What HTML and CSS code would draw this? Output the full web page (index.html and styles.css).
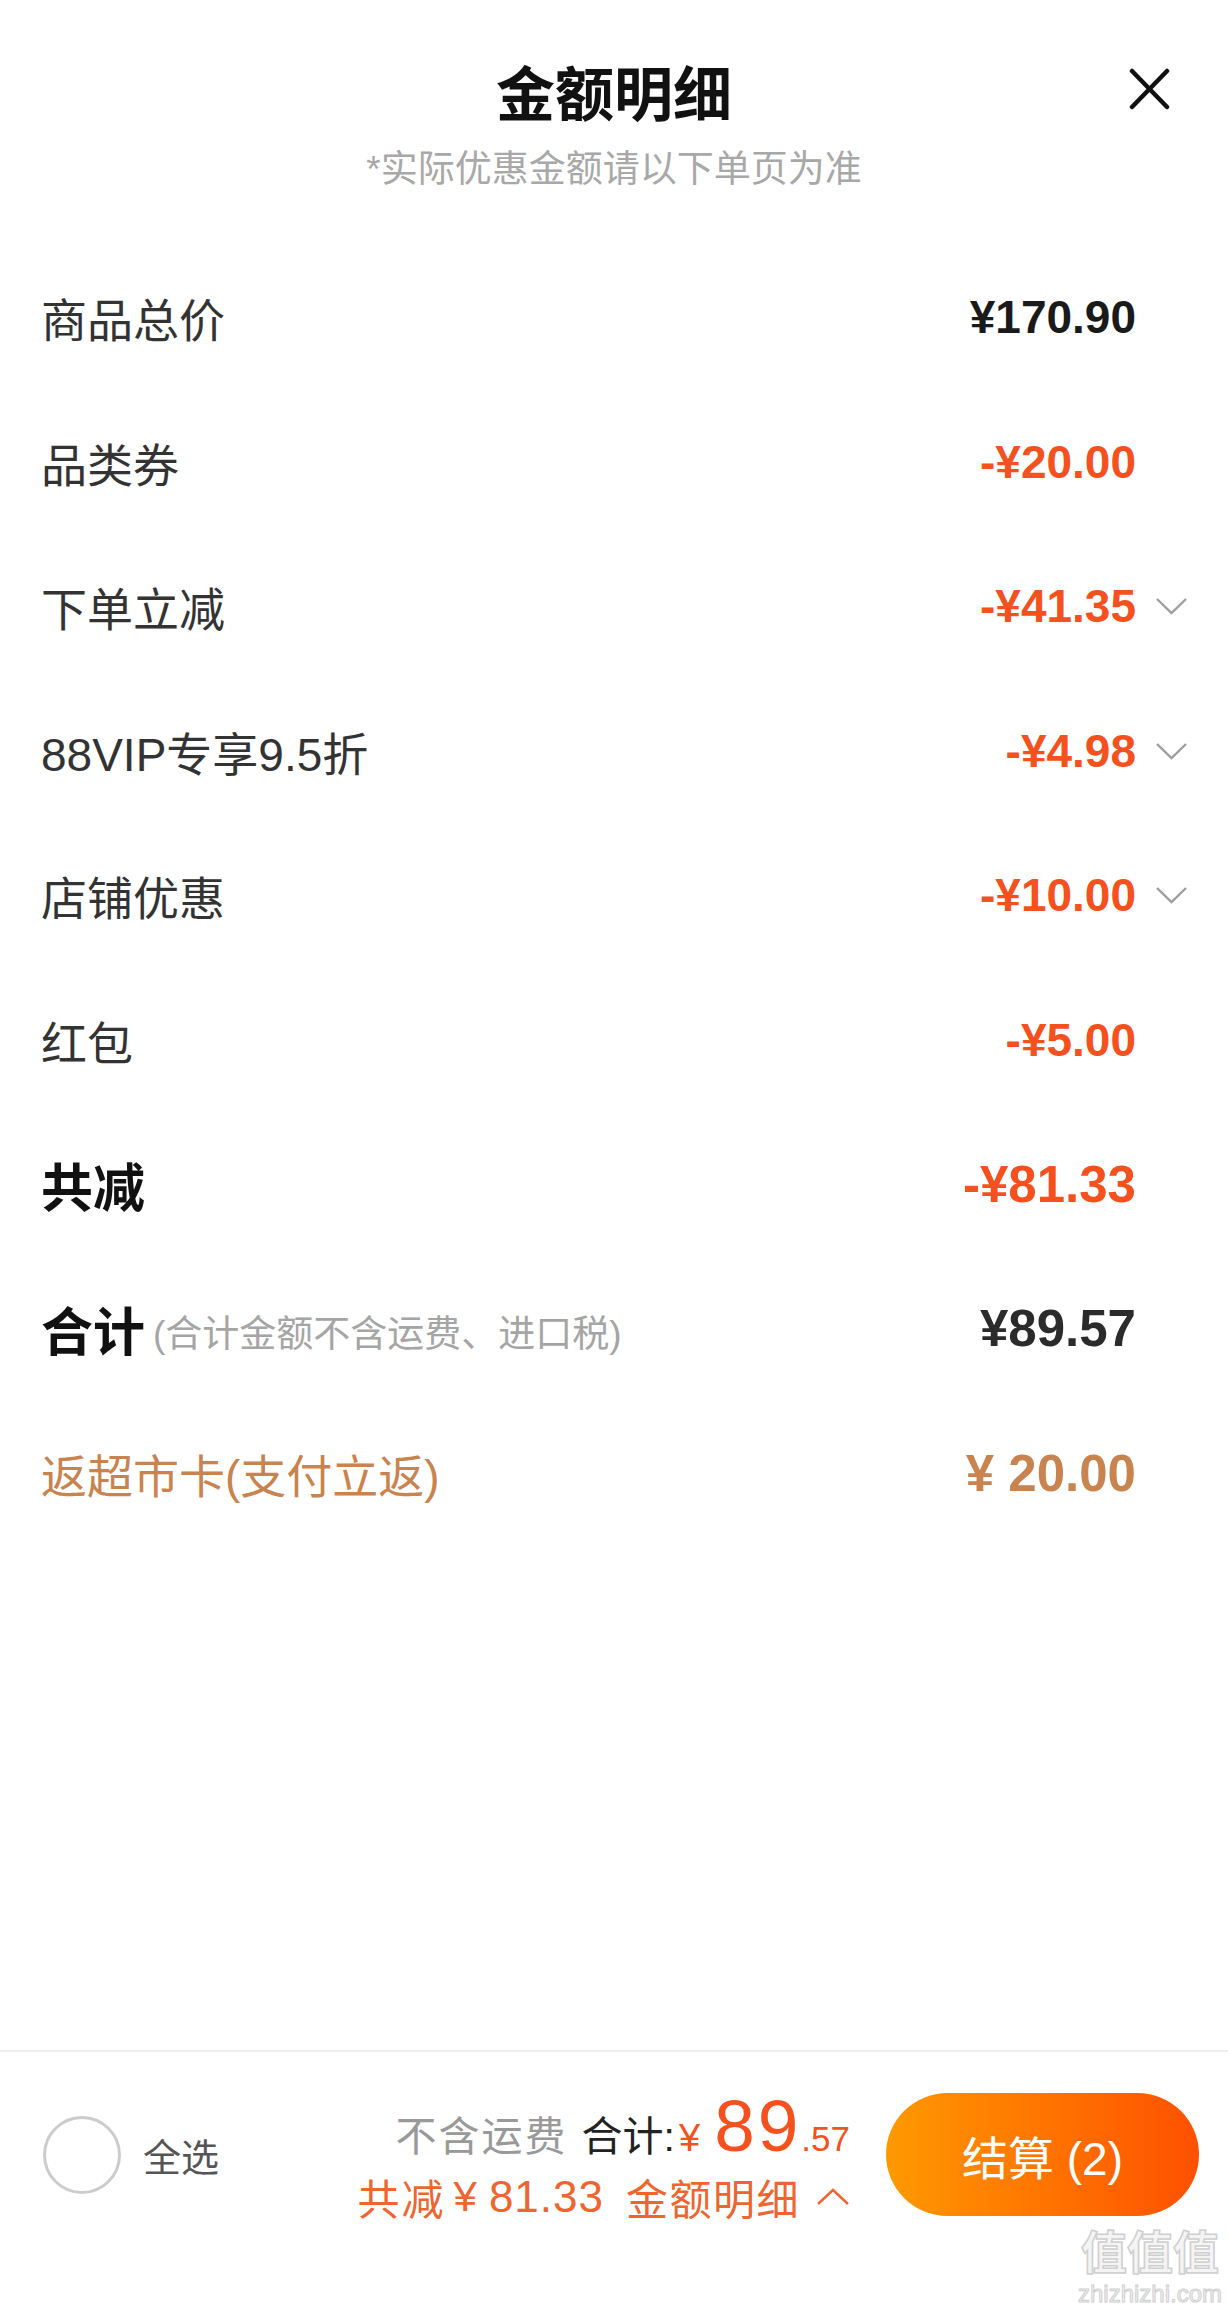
FILE: index.html
```html
<!DOCTYPE html>
<html lang="zh-CN">
<head>
  <meta charset="UTF-8" />
  <title>金额明细</title>
  <link rel="stylesheet" href="styles.css">
</head>
<body>
  <div class="sheet">
    <!-- HEADER -->
    <div class="sheet-head">
      <h1 class="sheet-title">金额明细</h1>
      <button class="close-btn" aria-label="关闭">
        <svg width="43" height="42" viewBox="0 0 43 42">
          <path d="M4 3 L39 39 M39 3 L4 39" stroke="#111" stroke-width="4.5" stroke-linecap="round" fill="none"/>
        </svg>
      </button>
      <p class="sheet-note">*实际优惠金额请以下单页为准</p>
    </div>

    <!-- DETAIL ROWS -->
    <div class="detail-list">
      <div class="detail-row">
        <span class="label">商品总价</span>
        <span class="value-wrap"><span class="amount">¥170.90</span><span class="arrow-slot"></span></span>
      </div>
      <div class="detail-row">
        <span class="label">品类券</span>
        <span class="value-wrap"><span class="amount minus">-¥20.00</span><span class="arrow-slot"></span></span>
      </div>
      <div class="detail-row">
        <span class="label">下单立减</span>
        <span class="value-wrap"><span class="amount minus">-¥41.35</span><span class="arrow-slot"><svg width="33" height="18" viewBox="0 0 33 18"><polyline points="2,2 16.5,16 31,2" fill="none" stroke="#9e9e9e" stroke-width="2.4"/></svg></span></span>
      </div>
      <div class="detail-row">
        <span class="label">88VIP专享9.5折</span>
        <span class="value-wrap"><span class="amount minus">-¥4.98</span><span class="arrow-slot"><svg width="33" height="18" viewBox="0 0 33 18"><polyline points="2,2 16.5,16 31,2" fill="none" stroke="#9e9e9e" stroke-width="2.4"/></svg></span></span>
      </div>
      <div class="detail-row">
        <span class="label">店铺优惠</span>
        <span class="value-wrap"><span class="amount minus">-¥10.00</span><span class="arrow-slot"><svg width="33" height="18" viewBox="0 0 33 18"><polyline points="2,2 16.5,16 31,2" fill="none" stroke="#9e9e9e" stroke-width="2.4"/></svg></span></span>
      </div>
      <div class="detail-row">
        <span class="label">红包</span>
        <span class="value-wrap"><span class="amount minus">-¥5.00</span><span class="arrow-slot"></span></span>
      </div>
      <div class="detail-row">
        <span class="label label-strong">共减</span>
        <span class="value-wrap"><span class="amount amount-big minus">-¥81.33</span><span class="arrow-slot"></span></span>
      </div>
      <div class="detail-row">
        <span class="label"><span class="label-strong">合计</span><span class="label-hint">(合计金额不含运费、进口税)</span></span>
        <span class="value-wrap"><span class="amount amount-big total">¥89.57</span><span class="arrow-slot"></span></span>
      </div>
      <div class="detail-row">
        <span class="label cashback">返超市卡(支付立返)</span>
        <span class="value-wrap"><span class="amount amount-big cashback">¥ 20.00</span><span class="arrow-slot"></span></span>
      </div>
    </div>

    <div class="spacer"></div>

    <!-- CHECKOUT BAR -->
    <div class="checkout-bar">
      <div class="select-all">
        <span class="radio"></span>
        <span class="select-text">全选</span>
      </div>
      <div class="price-block">
        <div class="price-line">
          <span class="no-ship">不含运费</span>
          <span class="sum-label">合计:</span>
          <span class="yen">¥</span>
          <span class="big-int">89</span>
          <span class="decimals">.57</span>
        </div>
        <div class="discount-line">
          <span class="d-label">共减</span>
          <span class="d-yen">¥</span>
          <span class="d-num">81.33</span>
          <span class="d-link">金额明细</span>
          <svg width="34" height="18" viewBox="0 0 34 18"><polyline points="2,16 17,2 32,16" fill="none" stroke="#ee6530" stroke-width="2.4"/></svg>
        </div>
      </div>
      <button class="checkout-btn">结算 (2)</button>
    </div>

    <div class="watermark">
      <span class="wm-big">值值值</span>
      <span class="wm-small">zhizhizhi.com</span>
    </div>
  </div>
</body>
</html>
```

FILE: styles.css
```css
/* GLOBAL */
* {
  box-sizing: border-box;
}

body {
  margin: 0;
  padding: 0;
  background-color: #fff;
  color: #333;
  font-family: "Liberation Sans", "Noto Sans CJK SC", sans-serif;
}

.sheet {
  position: relative;
  width: 1228px;
  min-height: 100vh;
  display: flex;
  flex-direction: column;
  background-color: #fff;
}

/* HEADER */
.sheet-head {
  height: 245px;
  padding: 62px 57px 0 57px;
  display: grid;
  grid-template-columns: 1fr auto 1fr;
  grid-template-rows: 68px auto;
  row-gap: 18px;
}

.sheet-title {
  grid-column: 2;
  margin: 0;
  font-size: 59px;
  line-height: 68px;
  font-weight: 700;
  color: #111;
}

.close-btn {
  grid-column: 3;
  justify-self: end;
  align-self: start;
  margin-top: 6px;
  padding: 0;
  border: none;
  background: none;
  width: 43px;
  height: 42px;
  display: block;
}

.sheet-note {
  grid-column: 1 / 4;
  margin: 0;
  text-align: center;
  font-size: 37px;
  line-height: 44px;
  color: #a8a8a8;
}

/* DETAIL ROWS */
.detail-list {
  padding: 0 40px 0 41px;
}

.detail-row {
  height: 144.5px;
  display: flex;
  align-items: center;
  justify-content: space-between;
}

.label {
  font-size: 46px;
  color: #333;
  display: flex;
  align-items: center;
}

.label-strong {
  font-size: 52px;
  font-weight: 700;
  color: #111;
}

.label-hint {
  font-size: 37px;
  color: #a5a5a5;
  margin-left: 8px;
  margin-top: 4px;
}

.value-wrap {
  display: flex;
  align-items: center;
}

.amount {
  font-size: 46px;
  font-weight: 700;
  color: #1a1a1a;
}

.amount-big {
  font-size: 51px;
}

.minus {
  color: #f4511e;
}

.total {
  color: #2b2b2b;
}

.cashback {
  color: #c8834f;
}

.arrow-slot {
  width: 33px;
  margin-left: 19px;
  display: flex;
  align-items: center;
}

.spacer {
  flex: 1;
}

/* CHECKOUT BAR */
.checkout-bar {
  height: 263px;
  border-top: 2px solid #eeeeee;
  padding: 41px 29px 0 43px;
  display: flex;
  align-items: flex-start;
}

.select-all {
  height: 123px;
  display: flex;
  align-items: center;
}

.radio {
  width: 78px;
  height: 78px;
  border: 3px solid #cccccc;
  border-radius: 50%;
}

.select-text {
  margin-left: 22px;
  font-size: 38px;
  color: #555;
}

.price-block {
  margin-left: auto;
  margin-right: 36px;
  margin-top: -9px;
  display: flex;
  flex-direction: column;
  align-items: flex-end;
}

.price-line {
  display: flex;
  align-items: baseline;
  height: 78px;
}

.no-ship {
  font-size: 41px;
  letter-spacing: 2px;
  color: #999;
}

.sum-label {
  font-size: 41px;
  color: #222;
  margin-left: 14px;
}

.yen {
  font-size: 38px;
  color: #f4511e;
  margin-left: 4px;
}

.big-int {
  font-size: 73px;
  color: #f4511e;
  margin-left: 14px;
  letter-spacing: 3px;
}

.decimals {
  font-size: 35px;
  color: #f4511e;
}

.discount-line {
  margin-top: 4px;
  display: flex;
  align-items: center;
  font-size: 42px;
  color: #ee6530;
}

.d-label {
  letter-spacing: 2px;
}

.d-yen {
  margin-left: 8px;
}

.d-num {
  margin-left: 12px;
  font-size: 44px;
  letter-spacing: 1px;
}

.d-link {
  margin-left: 22px;
  letter-spacing: 1.5px;
}

.discount-line svg {
  margin-left: 16px;
}

.checkout-btn {
  width: 313px;
  height: 123px;
  border: none;
  border-radius: 62px;
  background: linear-gradient(90deg, #ff9900, #ff5000);
  color: #fff;
  font-family: "Liberation Sans", "Noto Sans CJK SC", sans-serif;
  font-size: 46px;
  padding: 0;
}

/* WATERMARK */
.watermark {
  position: absolute;
  right: 6px;
  bottom: 4px;
  display: flex;
  flex-direction: column;
  align-items: center;
  color: #f4f4f4;
  -webkit-text-stroke: 1.5px #cfcfcf;
}

.wm-big {
  font-size: 46px;
  line-height: 52px;
  font-weight: 700;
}

.wm-small {
  font-size: 24px;
  line-height: 30px;
  -webkit-text-stroke: 1px #cfcfcf;
}
```
